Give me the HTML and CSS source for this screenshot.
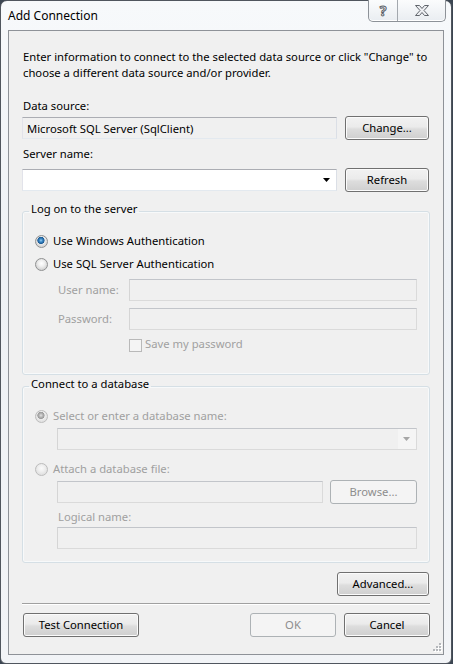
FILE: index.html
```html
<!DOCTYPE html>
<html lang="en">
<head>
    <meta charset="UTF-8">
    <meta name="viewport" content="width=device-width, initial-scale=1.0">
    <title>Add Connection</title>
    <link rel="stylesheet" href="styles.css">
</head>
<body>
    <div class="window">
        <div class="titlebar">
            <span class="title">Add Connection</span>
            <div class="caption-buttons">
                <span class="cap cap-help">?</span>
                <span class="cap cap-close">
                    <svg width="14" height="11" viewBox="0 0 14 11">
                        <path d="M0.5 0.5h4l2.5 3 2.5-3h4l-4.5 5 4.5 5h-4l-2.5-3-2.5 3h-4l4.5-5z" fill="#eef0f3" stroke="#60656c" stroke-width="1"/>
                    </svg>
                </span>
            </div>
        </div>

        <div class="client">
            <p class="intro">Enter information to connect to the selected data source or click "Change" to<br>choose a different data source and/or provider.</p>

            <label class="field-label label-source" for="data-source">Data source:</label>
            <div class="row row-source">
                <input id="data-source" class="textbox readonly" type="text" value="Microsoft SQL Server (SqlClient)" readonly>
                <button class="btn btn-side">Change...</button>
            </div>

            <label class="field-label label-server" for="server-name">Server name:</label>
            <div class="row row-server">
                <div class="combo">
                    <input id="server-name" class="combo-input" type="text">
                    <span class="combo-arrow">
                        <svg width="8" height="5" viewBox="0 0 8 5"><path d="M0 0h7l-3.5 4z" fill="#000"/></svg>
                    </span>
                </div>
                <button class="btn btn-side">Refresh</button>
            </div>

            <fieldset class="group group-logon">
                <legend>Log on to the server</legend>
                <label class="option option-first">
                    <input class="radio" type="radio" name="auth" checked>
                    <span>Use Windows Authentication</span>
                </label>
                <label class="option option-next">
                    <input class="radio" type="radio" name="auth">
                    <span>Use SQL Server Authentication</span>
                </label>
                <div class="credentials">
                    <label class="cred-label" for="user-name">User name:</label>
                    <input id="user-name" class="textbox" type="text" disabled>
                    <label class="cred-label" for="password">Password:</label>
                    <input id="password" class="textbox" type="password" disabled>
                    <label class="check">
                        <input class="checkbox" type="checkbox" disabled>
                        <span>Save my password</span>
                    </label>
                </div>
            </fieldset>

            <fieldset class="group group-database">
                <legend>Connect to a database</legend>
                <label class="option option-first disabled">
                    <input class="radio" type="radio" name="db" checked disabled>
                    <span>Select or enter a database name:</span>
                </label>
                <div class="combo combo-db disabled">
                    <input class="combo-input" type="text" disabled>
                    <span class="combo-arrow">
                        <svg width="8" height="5" viewBox="0 0 8 5"><path d="M0 0h7l-3.5 4z" fill="#a6a6a6"/></svg>
                    </span>
                </div>
                <label class="option option-attach disabled">
                    <input class="radio" type="radio" name="db" disabled>
                    <span>Attach a database file:</span>
                </label>
                <div class="row row-file">
                    <input class="textbox" type="text" disabled>
                    <button class="btn btn-browse" disabled>Browse...</button>
                </div>
                <label class="field-label label-logical disabled">Logical name:</label>
                <input class="textbox textbox-logical" type="text" disabled>
            </fieldset>

            <div class="row row-advanced">
                <button class="btn btn-advanced">Advanced...</button>
            </div>

            <hr class="separator">

            <div class="row row-actions">
                <button class="btn btn-test">Test Connection</button>
                <button class="btn btn-dialog" disabled>OK</button>
                <button class="btn btn-dialog">Cancel</button>
            </div>

            <svg class="grip" width="10" height="10" viewBox="0 0 10 10">
                <g fill="#fff">
                    <rect x="8" y="1" width="2" height="2"/>
                    <rect x="5" y="4" width="2" height="2"/><rect x="8" y="4" width="2" height="2"/>
                    <rect x="2" y="7" width="2" height="2"/><rect x="5" y="7" width="2" height="2"/><rect x="8" y="7" width="2" height="2"/>
                </g>
                <g fill="#b4b7bb">
                    <rect x="7" y="0" width="2" height="2"/>
                    <rect x="4" y="3" width="2" height="2"/><rect x="7" y="3" width="2" height="2"/>
                    <rect x="1" y="6" width="2" height="2"/><rect x="4" y="6" width="2" height="2"/><rect x="7" y="6" width="2" height="2"/>
                </g>
            </svg>
        </div>
    </div>
</body>
</html>
```

FILE: styles.css
```css
* {
    box-sizing: border-box;
}
html, body {
    margin: 0;
    padding: 0;
}
body {
    width: 453px;
    height: 664px;
    overflow: hidden;
    background: #3c4652;
    font-family: "Noto Sans", "Open Sans", sans-serif;
    font-size: 11.25px;
    line-height: 16px;
    color: #000;
}

/* window frame */
.window {
    width: 452px;
    height: 664px;
    display: flex;
    flex-direction: column;
    padding: 0 7px 8px 7px;
    border: 1px solid #50565e;
    border-radius: 7px 7px 6px 6px;
    background: linear-gradient(#f7f9fb, #eef1f5 40%, #f2f4f7);
}
.titlebar {
    height: 29px;
    display: flex;
    align-items: flex-start;
}
.title {
    margin-top: 7px;
    font-size: 12px;
    color: #000;
}
.caption-buttons {
    display: flex;
    height: 22px;
    margin: -1px -2px 0 auto;
    border: 1px solid #8d9298;
    border-top: none;
    border-radius: 0 0 5px 5px;
    background: linear-gradient(#fbfcfd, #e9edf1);
    box-shadow: inset 0 -1px 0 #fff;
}
.cap {
    display: flex;
    align-items: center;
    justify-content: center;
}
.cap-help {
    width: 29px;
    border-right: 1px solid #a3a8ae;
    font-size: 14px;
    font-weight: bold;
    color: #f4f5f7;
    -webkit-text-stroke: 1px #5a5f66;
    padding-top: 1px;
}
.cap-close {
    width: 47px;
    padding-bottom: 1px;
}

/* client area */
.client {
    flex: 1;
    position: relative;
    padding: 0 13px 0 13px;
    border: 1px solid #8e9298;
    background: #f0f0f0;
}
.intro {
    margin: 18px 0 0 1px;
}
.field-label {
    display: block;
    margin-left: 1px;
}
.label-source {
    margin-top: 17px;
}
.label-server {
    margin-top: 6px;
}
.row {
    display: flex;
    align-items: center;
    gap: 8px;
}
.row-source {
    margin-top: 2px;
}
.row-server {
    margin-top: 6px;
}

/* text boxes */
.textbox,
.combo {
    height: 22px;
    border: 1px solid;
    border-color: #abadb3 #dbdfe6 #e3e9ef #e2e3ea;
    background: #fff;
}
.textbox {
    display: block;
    padding: 0 4px;
    font: inherit;
    color: #000;
    outline: none;
}
.row .textbox,
.row .combo {
    flex: 1;
}
.readonly {
    background: #f0f0f0;
}
.textbox:disabled,
.combo.disabled {
    background: #f0f0f0;
    border-color: #c2c5ca #dadada #dadada #d5d5d5;
}
.combo {
    display: flex;
}
.combo-input {
    flex: 1;
    min-width: 0;
    border: none;
    background: transparent;
    font: inherit;
    outline: none;
}
.combo-arrow {
    width: 18px;
    display: flex;
    align-items: center;
    justify-content: center;
}
.combo.disabled .combo-arrow {
    background: #f5f5f5;
}

/* buttons */
.btn {
    height: 24px;
    padding: 0;
    font: inherit;
    color: #000;
    border: 1px solid #707070;
    border-radius: 3px;
    background: linear-gradient(#f2f2f2, #ebebeb 45%, #dddddd 55%, #cfcfcf);
    box-shadow: inset 0 0 0 1px #fbfbfb;
}
.btn:disabled {
    color: #8d8d8d;
    border-color: #adb2b5;
    background: #f4f4f4;
    box-shadow: none;
}
.btn-side {
    width: 84px;
    margin-right: 1px;
}

/* group boxes */
.group {
    margin: 0;
    padding: 0 12px 0 12px;
    border: 1px solid #d5dfe5;
    border-radius: 3px;
    box-shadow: inset 0 0 0 1px #f7f9fa;
    min-width: 0;
}
.group legend {
    margin-left: -6px;
    padding: 0 2px 4px 2px;
    line-height: 16px;
}
.group-logon {
    margin-top: 9px;
    padding-bottom: 22px;
}
.group-database {
    margin-top: 1px;
    padding-bottom: 13px;
}
.option {
    display: flex;
    align-items: center;
    gap: 5px;
}
.option-first {
    margin-top: 12px;
}
.option-next {
    margin-top: 7px;
}
.option-attach {
    margin-top: 11px;
}
.disabled,
.cred-label {
    color: #a0a0a0;
}

/* radio buttons and check boxes */
.radio {
    appearance: none;
    -webkit-appearance: none;
    margin: 0;
    width: 13px;
    height: 13px;
    flex: none;
    border: 1px solid #8f9091;
    border-radius: 50%;
    background: radial-gradient(circle at 50% 40%, #ffffff 0, #f0f0f0 3px, #d6d6d6 6px);
}
.radio:checked {
    background:
        radial-gradient(circle at 45% 40%, #9fd0f2 0, #3d8cca 1.5px, #1c5a93 3.3px, transparent 3.9px),
        radial-gradient(circle at 50% 40%, #ffffff 0, #f0f0f0 3px, #d6d6d6 6px);
}
.radio:disabled {
    border-color: #bcbcbc;
    background: radial-gradient(circle at 50% 40%, #fafafa 0, #f0f0f0 3px, #e2e2e2 6px);
}
.radio:disabled:checked {
    background:
        radial-gradient(circle at 45% 40%, #e3e3e3 0, #b5b5b5 1.8px, #9a9a9a 3.3px, transparent 3.9px),
        radial-gradient(circle at 50% 40%, #fafafa 0, #f0f0f0 3px, #e2e2e2 6px);
}
.checkbox {
    appearance: none;
    -webkit-appearance: none;
    margin: 3px 0 0 0;
    width: 13px;
    height: 13px;
    flex: none;
    border: 1px solid #b9b9b9;
    background: #f4f4f4;
}

/* user name and password */
.credentials {
    display: grid;
    grid-template-columns: 71px 1fr;
    align-items: center;
    margin: 7px 0 0 23px;
    row-gap: 7px;
}
.check {
    grid-column: 2;
    display: flex;
    align-items: flex-start;
    gap: 3px;
    margin-top: -1px;
}
.check span {
    color: #a0a0a0;
}

/* database section */
.combo-db {
    margin: 4px 0 0 22px;
}
.row-file {
    margin: 3px 0 0 22px;
    gap: 7px;
}
.row-file .textbox {
    flex: none;
    width: 266px;
}
.btn-browse {
    flex: 1;
}
.label-logical {
    margin: 5px 0 0 23px;
}
.textbox-logical {
    width: calc(100% - 22px);
    margin: 2px 0 0 22px;
}

/* bottom buttons */
.row-advanced {
    margin-top: 9px;
    justify-content: flex-end;
}
.btn-advanced {
    width: 92px;
    margin-right: 1px;
}
.separator {
    margin: 7px 0 0 0;
    height: 1px;
    border: none;
    background: #a0a0a0;
    box-shadow: 0 1px 0 #fff;
}
.row-actions {
    margin-top: 9px;
}
.btn-test {
    width: 116px;
    margin-left: 1px;
    margin-right: auto;
}
.btn-dialog {
    width: 86px;
}
.grip {
    position: absolute;
    right: 1px;
    bottom: 1px;
}
```
